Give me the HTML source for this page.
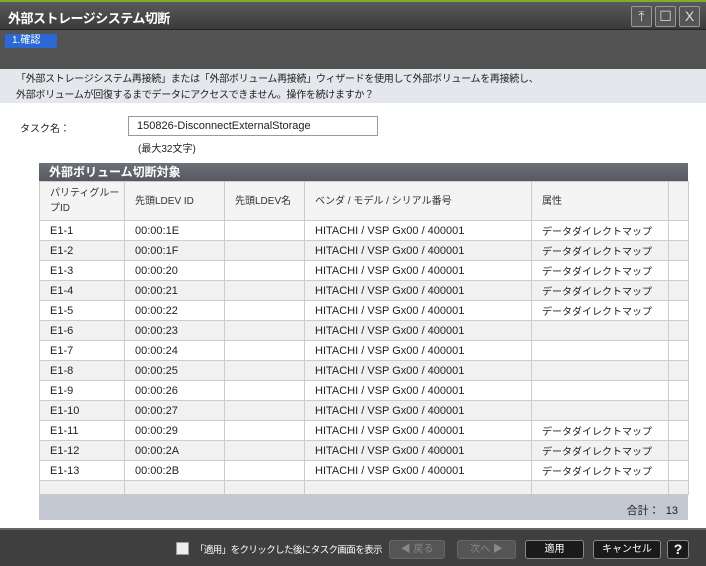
<!DOCTYPE html>
<html><head><meta charset="utf-8"><style>
*{margin:0;padding:0;box-sizing:border-box}
body{width:706px;height:566px;overflow:hidden;font-family:"Liberation Sans","Noto Sans CJK JP",sans-serif;font-size:11px;color:#222;background:#fff;position:relative}
.top{position:absolute;left:0;top:0;width:706px;height:30px;background:linear-gradient(#5a5a5a,#3a3a3a);border-top:2px solid #7bb02a;border-bottom:1px solid #222}
.title{position:absolute;left:8px;top:6px;color:#fff;font-weight:bold;font-size:13px;letter-spacing:-0.5px}
.wb{position:absolute;top:4px;width:21px;height:21px;border:1px solid #999;background:#555;color:#ddd;font-size:14px;text-align:center;line-height:19px;border-radius:2px}
.band{position:absolute;left:0;top:30px;width:706px;height:39px;background:#535353}
.step{position:absolute;left:5px;top:34px;width:52px;height:14px;background:#2a68d4;color:#fff;font-size:10px;padding-left:7px;line-height:14px}
.msg{position:absolute;left:0;top:69px;width:706px;height:34px;background:#e4e7ec;padding:3px 0 0 16px;line-height:16px;font-size:10px;letter-spacing:-0.3px}
.lbl{position:absolute;left:20px;top:120px;font-size:10px}
.inp{position:absolute;left:128px;top:116px;width:250px;height:20px;border:1px solid #999;padding:3px 8px;font-size:11px}
.max{position:absolute;left:138px;top:140px;font-size:10px}
.tbl{position:absolute;left:39px;top:163px;width:649px}
.th{height:18px;background:linear-gradient(#6d7078,#555860);color:#fff;font-weight:bold;font-size:12px;padding:1px 10px;line-height:17px}
table{border-collapse:collapse;width:649px;table-layout:fixed}
td{border:1px solid #ccc;padding:0 10px;height:20px;font-size:11px;white-space:nowrap;overflow:hidden}
tr.h td{height:39px;background:#f4f4f4;color:#333;line-height:15px;font-size:10px}
tr:nth-child(odd):not(.h) td{background:#f1f1f1}
tr.e td{height:14px;font-size:0;line-height:0}
td.j{font-size:10px}
.sum{height:25px;background:#c3c7d1;text-align:right;padding:7px 10px 0 0}
.foot{position:absolute;left:0;top:528px;width:706px;height:38px;background:#3f3f3f;border-top:2px solid #666}
.btn{position:absolute;top:10px;height:19px;border:1px solid #888;border-radius:3px;background:#1a1a1a;color:#fff;text-align:center;line-height:17px;font-size:10px}
.dis{background:#555;color:#888;border-color:#666}
</style></head><body>
<div class="top"><div class="title">外部ストレージシステム切断</div>
<div class="wb" style="left:631px">⤒</div><div class="wb" style="left:655px">☐</div><div class="wb" style="left:679px">X</div></div>
<div class="band"></div><div class="step">1.確認</div>
<div class="msg">「外部ストレージシステム再接続」または「外部ボリューム再接続」ウィザードを使用して外部ボリュームを再接続し、<br>外部ボリュームが回復するまでデータにアクセスできません。操作を続けますか？</div>
<div class="lbl">タスク名：</div>
<div class="inp">150826-DisconnectExternalStorage</div>
<div class="max">(最大32文字)</div>
<div class="tbl"><div class="th">外部ボリューム切断対象</div>
<table><colgroup><col style="width:85px"><col style="width:100px"><col style="width:80px"><col style="width:227px"><col style="width:137px"><col style="width:20px"></colgroup>
<tr class="h"><td>パリティグルー<br>プID</td><td>先頭LDEV ID</td><td>先頭LDEV名</td><td>ベンダ / モデル / シリアル番号</td><td>属性</td><td></td></tr>
<tr><td>E1-1</td><td>00:00:1E</td><td></td><td>HITACHI / VSP Gx00 / 400001</td><td class="j">データダイレクトマップ</td><td></td></tr>
<tr><td>E1-2</td><td>00:00:1F</td><td></td><td>HITACHI / VSP Gx00 / 400001</td><td class="j">データダイレクトマップ</td><td></td></tr>
<tr><td>E1-3</td><td>00:00:20</td><td></td><td>HITACHI / VSP Gx00 / 400001</td><td class="j">データダイレクトマップ</td><td></td></tr>
<tr><td>E1-4</td><td>00:00:21</td><td></td><td>HITACHI / VSP Gx00 / 400001</td><td class="j">データダイレクトマップ</td><td></td></tr>
<tr><td>E1-5</td><td>00:00:22</td><td></td><td>HITACHI / VSP Gx00 / 400001</td><td class="j">データダイレクトマップ</td><td></td></tr>
<tr><td>E1-6</td><td>00:00:23</td><td></td><td>HITACHI / VSP Gx00 / 400001</td><td></td><td></td></tr>
<tr><td>E1-7</td><td>00:00:24</td><td></td><td>HITACHI / VSP Gx00 / 400001</td><td></td><td></td></tr>
<tr><td>E1-8</td><td>00:00:25</td><td></td><td>HITACHI / VSP Gx00 / 400001</td><td></td><td></td></tr>
<tr><td>E1-9</td><td>00:00:26</td><td></td><td>HITACHI / VSP Gx00 / 400001</td><td></td><td></td></tr>
<tr><td>E1-10</td><td>00:00:27</td><td></td><td>HITACHI / VSP Gx00 / 400001</td><td></td><td></td></tr>
<tr><td>E1-11</td><td>00:00:29</td><td></td><td>HITACHI / VSP Gx00 / 400001</td><td class="j">データダイレクトマップ</td><td></td></tr>
<tr><td>E1-12</td><td>00:00:2A</td><td></td><td>HITACHI / VSP Gx00 / 400001</td><td class="j">データダイレクトマップ</td><td></td></tr>
<tr><td>E1-13</td><td>00:00:2B</td><td></td><td>HITACHI / VSP Gx00 / 400001</td><td class="j">データダイレクトマップ</td><td></td></tr>
<tr class="e"><td></td><td></td><td></td><td></td><td></td><td></td></tr>
</table>
<div class="sum">合計：&nbsp; 13</div></div>
<div class="foot">
<div style="position:absolute;left:176px;top:12px;width:13px;height:13px;background:#eee;border:1px solid #999"></div>
<div style="position:absolute;left:195px;top:12px;color:#fff;font-size:9.5px;letter-spacing:-0.6px;white-space:nowrap">「適用」をクリックした後にタスク画面を表示</div>
<div class="btn dis" style="left:389px;width:56px">◀ 戻る</div>
<div class="btn dis" style="left:457px;width:59px">次へ ▶</div>
<div class="btn" style="left:525px;width:59px">適用</div>
<div class="btn" style="left:593px;width:68px">キャンセル</div>
<div class="btn" style="left:667px;width:22px;font-weight:bold;font-size:14px">?</div>
</div>
</body></html>
